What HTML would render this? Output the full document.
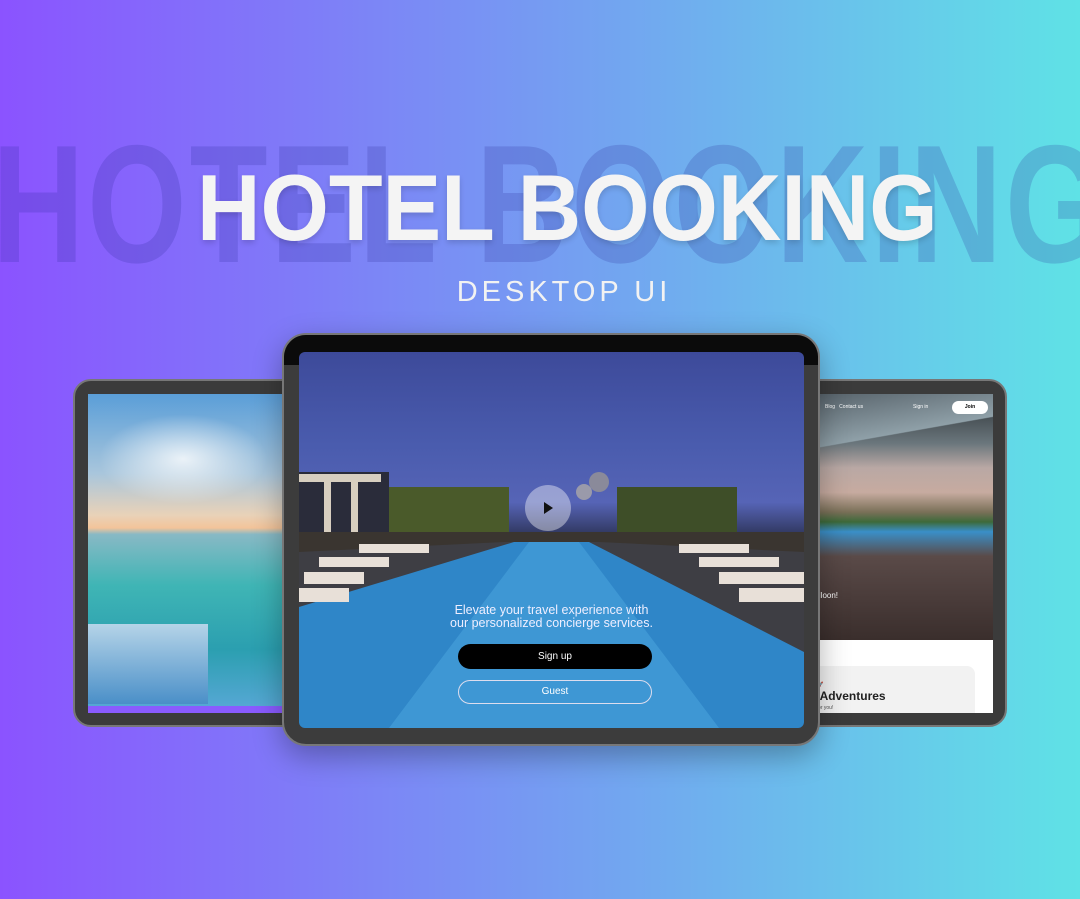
<!DOCTYPE html>
<html><head><meta charset="utf-8"><style>
*{margin:0;padding:0;box-sizing:border-box}
body{width:1080px;height:899px;overflow:hidden;position:relative;font-family:"Liberation Sans",sans-serif;
background:linear-gradient(90deg,#8b53ff 0%,#7c86f6 35%,#6fb0ee 65%,#5fe2e6 100%);}
.ghost{position:absolute;left:-8px;top:112px;white-space:nowrap;font-family:"Liberation Sans",sans-serif;font-weight:bold;font-size:168px;letter-spacing:4px;color:rgba(40,40,150,0.2);transform:scaleX(0.76);transform-origin:left top;line-height:1.1}
.title{position:absolute;left:197px;top:156px;white-space:nowrap;font-family:"Liberation Sans",sans-serif;font-weight:bold;font-size:94px;color:#f4f4f4;line-height:1.1;transform:scaleX(0.935);transform-origin:left top;text-shadow:0 3px 6px rgba(0,0,0,.15)}
.sub{position:absolute;left:0;width:1080px;top:276px;text-align:center;font-size:29px;color:#f2f2f2;letter-spacing:4px;font-weight:300;padding-left:48px}
.tab{position:absolute;background:#3b3b3b;border:2px solid #777;border-radius:22px}
</style></head><body>
<div class="ghost">HOTEL BOOKING</div>
<div class="title">HOTEL BOOKING</div>
<div class="sub">DESKTOP UI</div>

<!-- left tablet -->
<div class="tab" style="left:73px;top:379px;width:240px;height:348px;border-radius:18px"></div>
<div style="position:absolute;left:88px;top:394px;width:210px;height:319px;overflow:hidden;background:linear-gradient(180deg,#5a9ed8 0%,#a9c6dc 25%,#e9d2b8 38%,#f3c49a 42%,#88b9c5 44%,#3fb5b5 60%,#2b9fb0 80%,#5aa8d8 100%)">
<div style="position:absolute;left:10px;top:20px;width:170px;height:90px;background:radial-gradient(ellipse at 50% 50%,rgba(255,255,255,.8),rgba(255,255,255,0) 70%)"></div>
<div style="position:absolute;left:0;top:230px;width:120px;height:80px;background:linear-gradient(180deg,#b5d4e8,#4a8fc8)"></div>
<div style="position:absolute;left:0;top:312px;width:210px;height:7px;background:#8a5bff"></div>
</div>

<!-- right tablet -->
<div class="tab" style="left:770px;top:379px;width:237px;height:348px;border-radius:18px"></div>
<div style="position:absolute;left:800px;top:394px;width:193px;height:319px;overflow:hidden;background:#fff">
<div style="position:absolute;left:0;top:0;width:193px;height:246px;background:linear-gradient(180deg,#2a2f33 0%,#6a767c 20%,#b9a8a4 30%,#c7aba0 40%,#7a7058 48%,#3d6a3a 52%,#3a8fc8 56%,#5a4a48 66%,#3a2e2c 100%)"></div>
<div style="position:absolute;left:0;top:0;width:193px;height:60px;background:linear-gradient(170deg,#556068,#8fa0a8 60%,rgba(0,0,0,0) 61%)"></div>
<div style="position:absolute;left:25px;top:10px;font-size:5px;color:#fff">Blog&nbsp;&nbsp;&nbsp;Contact us</div>
<div style="position:absolute;left:113px;top:10px;font-size:5px;color:#fff">Sign in</div>
<div style="position:absolute;left:152px;top:7px;width:36px;height:13px;border-radius:7px;background:#fff;font-size:5px;font-weight:bold;text-align:center;line-height:13px">Join</div>
<div style="position:absolute;left:10px;top:197px;font-size:8px;color:#fff">balloon!</div>
<div style="position:absolute;left:0;top:272px;width:175px;height:60px;border-radius:8px;background:#f2f2f2"></div>
<div style="position:absolute;left:10px;top:288px;font-size:5px;color:#555">on 🚀</div>
<div style="position:absolute;left:10px;top:295px;font-size:12px;font-weight:bold;color:#222">s Adventures</div>
<div style="position:absolute;left:10px;top:311px;font-size:5px;color:#555">ce for you!</div>
</div>

<!-- center tablet -->
<div class="tab" style="left:282px;top:333px;width:538px;height:413px;border-radius:24px;background:#3c3c3c;box-shadow:0 10px 30px rgba(0,0,0,.3)"></div>
<div style="position:absolute;left:284px;top:335px;width:534px;height:30px;background:#0b0b0b;border-radius:22px 22px 0 0"></div>
<div style="position:absolute;left:299px;top:352px;width:505px;height:376px;overflow:hidden;border-radius:6px;background:linear-gradient(180deg,#3d4a9a 0%,#4a5cae 25%,#5664b6 40%,#2a3050 50%,#1e2430 60%)">
<svg width="505" height="376" style="position:absolute;left:0;top:0">
<rect x="0" y="120" width="90" height="100" fill="#2a2c3a"/>
<rect x="0" y="122" width="82" height="8" fill="#d8cfc0"/>
<rect x="25" y="128" width="7" height="70" fill="#d8cfc0"/><rect x="52" y="128" width="7" height="80" fill="#d8cfc0"/>
<rect x="90" y="135" width="120" height="45" fill="#4a5a2a"/>
<rect x="318" y="135" width="120" height="45" fill="#3e4e28"/>
<rect x="0" y="180" width="505" height="20" fill="#3a3530"/>
<polygon points="0,200 205,190 300,190 505,200 505,376 0,376" fill="#3e3e44"/>
<polygon points="215,190 290,190 505,300 505,376 0,376 0,255" fill="#2f86c8"/>
<polygon points="230,190 280,190 420,376 90,376" fill="#4aa3dc" opacity=".6"/>
<g fill="#e8e0d8"><rect x="0" y="236" width="50" height="14"/><rect x="5" y="220" width="60" height="12"/><rect x="20" y="205" width="70" height="10"/><rect x="440" y="236" width="65" height="14"/><rect x="420" y="220" width="85" height="12"/><rect x="400" y="205" width="80" height="10"/><rect x="380" y="192" width="70" height="9"/><rect x="60" y="192" width="70" height="9"/></g>
<circle cx="249" cy="156" r="23" fill="rgba(255,255,255,.4)"/>
<polygon points="245,150 245,162 254,156" fill="#111"/>
<circle cx="300" cy="130" r="10" fill="#8a8a9a"/><circle cx="285" cy="140" r="8" fill="#9a9aaa"/>
</svg>
<div style="position:absolute;left:0;width:505px;top:252px;text-align:center;font-size:12.5px;color:#eef;line-height:13px">Elevate your travel experience with<br>our personalized concierge services.</div>
<div style="position:absolute;left:159px;top:292px;width:194px;height:25px;border-radius:13px;background:#000;color:#fff;font-size:10px;text-align:center;line-height:25px">Sign up</div>
<div style="position:absolute;left:159px;top:328px;width:194px;height:24px;border-radius:12px;border:1px solid #dde;color:#fff;font-size:10px;text-align:center;line-height:22px">Guest</div>
</div>
</body></html>
